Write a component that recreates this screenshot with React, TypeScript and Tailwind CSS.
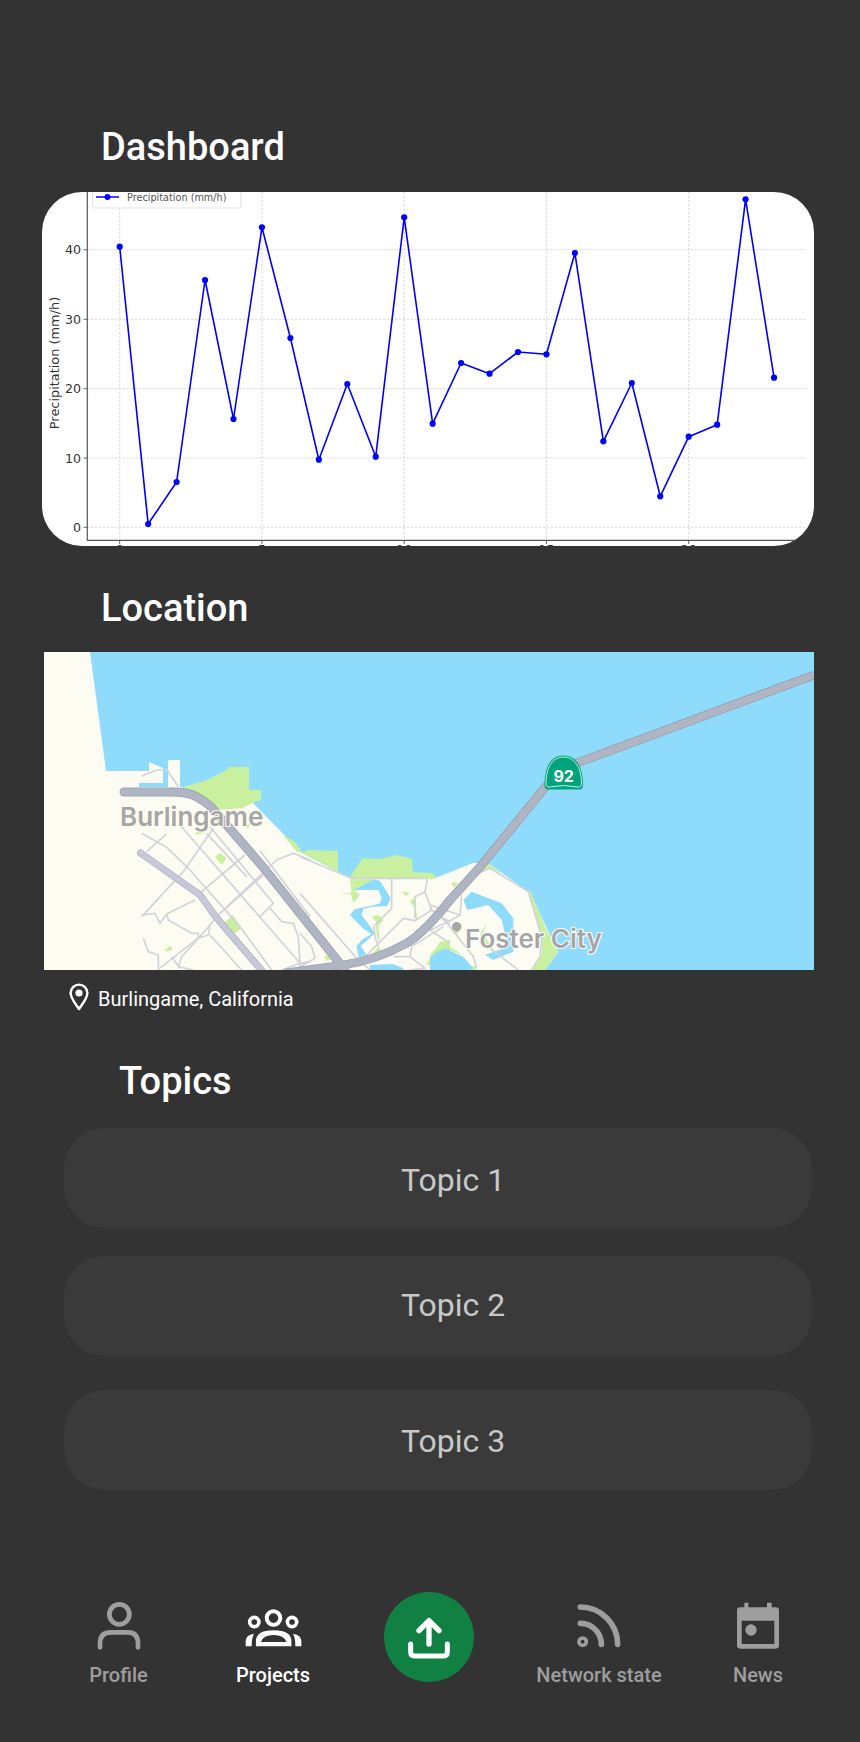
const POINTS = [246.7, 524, 482, 280, 419, 227.3, 338, 459.7, 384, 456.7, 217.3, 423.7, 363, 373.7, 352, 354.3, 253, 441.3, 383, 496.3, 436.7, 424.7, 199.3, 377.7];
const px = (i: number) => 119.7 + 28.45 * i;
const GRID_X = [0, 5, 10, 15, 20];
const GRID_Y = [
  { v: 0, y: 527.3 },
  { v: 10, y: 458 },
  { v: 20, y: 388.7 },
  { v: 30, y: 319.3 },
  { v: 40, y: 249.7 },
];

function Chart() {
  return (
    <div className="ml-[42px] mt-[23px] h-[354px] w-[772px] overflow-hidden rounded-[40px] bg-white">
      <svg viewBox="42 192 772 354" className="block h-[354px] w-[772px]" fontFamily="'DejaVu Sans', sans-serif">
        {GRID_X.map((g) => (
          <line key={g} x1={px(g)} x2={px(g)} y1={192} y2={540} stroke="#cfcfcf" strokeWidth="0.8" strokeDasharray="2.5 1.5" />
        ))}
        {GRID_Y.map((g) => (
          <g key={g.v}>
            <line x1={87} x2={806} y1={g.y} y2={g.y} stroke="#cfcfcf" strokeWidth="0.8" strokeDasharray="2.5 1.5" />
            <line x1={83.5} x2={87} y1={g.y} y2={g.y} stroke="#444" strokeWidth="0.8" />
            <text x={81} y={g.y + 4.5} textAnchor="end" fontSize="12.6" fill="#333">{g.v}</text>
          </g>
        ))}
        <line x1={87.3} x2={87.3} y1={192} y2={540.5} stroke="#555" strokeWidth="1.2" />
        <line x1={87} x2={810} y1={540.3} y2={540.3} stroke="#555" strokeWidth="1.2" />
        {GRID_X.map((g) => (
          <g key={g}>
            <line x1={px(g)} x2={px(g)} y1={540} y2={544} stroke="#444" strokeWidth="0.8" />
            <text x={px(g)} y={553.6} textAnchor="middle" fontSize="12.6" fill="#333">{g}</text>
          </g>
        ))}
        <text transform="translate(55 363) rotate(-90)" y={4} textAnchor="middle" fontSize="12.9" fill="#333">Precipitation (mm/h)</text>
        <polyline points={POINTS.map((y, i) => `${px(i)},${y}`).join(" ")} fill="none" stroke="#0000ff" strokeWidth="1.6" strokeLinejoin="round" />
        {POINTS.map((y, i) => (
          <circle key={i} cx={px(i)} cy={y} r="3.1" fill="#0000ff" />
        ))}
        <rect x={92.5} y={180} width={148.5} height={28} rx="2" fill="#fff" stroke="#e0e0e0" />
        <line x1={96} x2={119} y1={197} y2={197} stroke="#0000ff" strokeWidth="1.4" />
        <circle cx={107.5} cy={197} r="3" fill="#0000ff" />
        <text x={127} y={201} fontSize="9.7" fill="#555">Precipitation (mm/h)</text>
      </svg>
    </div>
  );
}

const HWY_WEST = "M124 792 H173 Q187 792 195 796 Q205 801 212 808 L263 867 L345 970";
const HWY_92 = "M285 973 L343 965 Q377 960 407 943 Q425 932 450 900 L480 867 L547 785 Q558 772 577 763 L814 675";

function MapView() {
  const road = "#d2d3da";
  const green = "#c9f09f";
  const water = "#8fdbfb";
  return (
    <div className="ml-[44px] mt-[22px] h-[318px] w-[770px] overflow-hidden">
      <svg viewBox="44 652 770 318" className="block h-[318px] w-[770px]" fontFamily="Inter, sans-serif">
        <rect x="44" y="652" width="770" height="318" fill={water} />
        <polygon
          fill="#fdfcf3"
          points="44,652 90,652 106,771 149,771 149,762 163,768 168,768 168,760 180,760 180,787 253,803 302,853 350,878 430,878 438,877 473,863 488,863 530,893 558,952 545,970 44,970"
        />
        <rect x="139" y="783" width="29" height="4" fill={water} />
        <polygon fill={water} points="163,768 168,768 168,783 163,783" />

        {/* parks */}
        <g fill={green}>
          <polygon points="183,787 207,780 223,772 230,767 249,767 249,790 261,790 261,800 252,803 243,808 217,810" />
          <polygon points="283,835 295,842 302,852 297,852" />
          <polygon points="302,853 307,850 338,851 338,872 317,860" />
          <polygon points="353,872 363,858 380,859 397,855 412,859 413,872 432,873 437,878 350,878" />
        </g>
        <g transform="translate(130 760) scale(0.3333)" fill={green}>
          <polygon points="255,290 270,278 290,295 275,315" />
          <polygon points="282,490 308,465 335,505 310,522" />
          <polygon points="105,570 122,557 128,568 112,575" />
          <polygon points="195,218 235,210 220,220 200,224" />
          <polygon points="345,195 360,190 355,205 345,205" />
        </g>
        <g transform="translate(300 840) scale(0.3333)">
          <g fill={green}>
            <polygon points="150,118 180,118 222,118 165,152 180,165 160,190 153,162 118,160 155,158" />
            <polygon points="215,228 235,225 250,240 235,258 240,310 230,290 228,245" />
            <polygon points="235,320 245,335 215,345" />
            <polygon points="305,155 330,158 318,168" />
            <polygon points="330,185 345,170 352,240 342,230 342,200" />
            <polygon points="72,350 85,345 92,360 80,362" />
            <polygon points="378,375 420,305 450,300 450,325 420,335 395,375" />
          </g>
          <g fill={water}>
            <polygon points="162,150 222,118 240,122 272,175 262,198 215,200 190,207 185,225 225,280 205,298 182,318 200,345 175,352 170,318 188,298 215,282 192,268 150,225 165,207 215,197 240,190 245,175 235,150" />
            <polygon points="210,375 280,372 310,385 310,390 210,390" />
            <polygon points="395,375 420,335 450,325 450,390 395,390" />
          </g>
        </g>
        <g transform="translate(430 840) scale(0.3333)">
          <g fill={green}>
            <polygon points="300,150 345,260 383,335 345,390 305,390 335,340 335,290 295,155" />
            <polygon points="150,95 175,70 215,100 180,85" />
            <polygon points="65,125 85,130 70,145" />
            <polygon points="0,100 20,115 0,120" />
            <polygon points="150,285 170,248 160,280 190,330 165,325" />
            <polygon points="65,275 90,270 80,285" />
            <polygon points="0,345 35,305 100,345 45,325 0,370" />
            <polygon points="110,385 135,378 138,390 110,390" />
          </g>
          <g fill={water}>
            <polygon points="100,180 125,155 215,190 250,235 250,335 190,360 165,345 235,320 215,240 175,195 112,210" />
            <polygon points="0,390 0,355 20,335 45,325 100,350 130,385 120,390" />
          </g>
        </g>

        {/* small roads */}
        <g transform="translate(130 760) scale(0.3333)" fill="none" stroke={road} strokeWidth="5" strokeLinejoin="round">
          <polyline points="35,48 80,30 110,28 145,80" />
          <polyline points="35,220 110,262 175,325 330,500 425,630" />
          <polyline points="50,275 110,222" />
          <polyline points="150,195 510,610" />
          <polyline points="240,200 430,430 390,470" />
          <polyline points="250,205 160,335 35,470" />
          <polyline points="345,285 215,395" />
          <polyline points="400,345 270,460" />
          <polyline points="230,220 350,350" />
          <polyline points="390,272 540,470" />
          <polyline points="540,300 490,280 440,300 270,460 210,530 85,628" />
          <polyline points="35,465 75,460 90,490 110,462 195,420" />
          <polyline points="110,462 115,480 185,520 205,520 205,535 155,590 145,620 190,630" />
          <polyline points="240,495 235,525 205,535" />
          <polyline points="40,535 55,575 85,585 85,628" />
          <polyline points="125,590 150,625" />
          <polyline points="240,525 335,630" />
          <polyline points="420,445 455,485 490,490 505,530 510,610 510,630" />
          <polyline points="455,630 510,610 540,605" />
        </g>
        <g transform="translate(300 840) scale(0.3333)" fill="none" stroke={road} strokeWidth="5" strokeLinejoin="round">
          <polyline points="0,50 155,115 383,115 375,155 395,210" />
          <polyline points="275,115 275,205 222,258 225,290 235,320" />
          <polyline points="375,155 345,170 345,235" />
          <polyline points="200,345 310,235 345,242 395,210" />
          <polyline points="0,160 170,355 210,390" />
          <polyline points="0,280 35,320 45,355 0,380" />
          <polyline points="280,350 330,350 335,320 430,260" />
          <polyline points="330,350 375,385 330,390" />
          <polyline points="390,270 450,310" />
          <polyline points="420,230 450,245" />
        </g>
        <g transform="translate(430 840) scale(0.3333)" fill="none" stroke={road} strokeWidth="5" strokeLinejoin="round">
          <polyline points="145,100 180,85 295,155 335,290 330,350 305,390" />
          <polyline points="95,165 90,225 45,210 0,195" />
          <polyline points="90,225 55,245 0,270" />
          <polyline points="0,205 60,255" />
          <polyline points="40,235 130,350 140,385" />
          <polyline points="180,325 265,390" />
        </g>

        {/* highways */}
        <polyline points="140.5,853 200,895 216,917 263,972" fill="none" stroke="#adb0c2" strokeWidth="7" strokeLinecap="round" />
        <polyline points="140.5,853 200,895 216,917 263,972" fill="none" stroke="#c7c9d9" strokeWidth="5.6" strokeLinecap="round" />
        <path d={HWY_WEST} fill="none" stroke="#9a9eae" strokeWidth="9" strokeLinecap="round" />
        <path d={HWY_92} fill="none" stroke="#9a9eae" strokeWidth="8.8" />
        <path d={HWY_WEST} fill="none" stroke="#b0b5c4" strokeWidth="7.4" strokeLinecap="round" />
        <path d={HWY_92} fill="none" stroke="#b0b5c4" strokeWidth="7.2" />

        {/* labels */}
        <circle cx="456.7" cy="926.7" r="4.7" fill="#a6a6a6" />
        <text x="120" y="826" fontSize="26" fontWeight="600" fill="#a6a6a6" stroke="#fdfcf3" strokeWidth="2" paintOrder="stroke">Burlingame</text>
        <text x="465" y="948" fontSize="26" fontWeight="600" fill="#a6a6a6" stroke="#ffffff" strokeWidth="2" paintOrder="stroke">Foster City</text>

        {/* route shield */}
        <path d="M544.5 785 C544.5 768 550 755.5 563.5 755.5 C577 755.5 583 768 583 785 Q583 789.5 579 789.5 H548.5 Q544.5 789.5 544.5 785 Z" fill="#00a37a" />
        <path d="M546 783 C546 769 551.5 757 563.5 757 C575.5 757 581.5 769 581.5 783 Q581.5 787.3 578 787 Q563.5 784 549.5 787 Q546 787.3 546 783 Z" fill="none" stroke="#fff" strokeWidth="0.8" />
        <text x="563.7" y="782" textAnchor="middle" fontSize="16" fontWeight="700" fill="#fff">92</text>
      </svg>
    </div>
  );
}

function ProfileIcon() {
  return (
    <svg viewBox="105 90 135 156" className="h-[52px] w-[45px]" fill="none" stroke="#9e9e9e" strokeWidth="14" strokeLinecap="round">
      <circle cx="175" cy="133" r="30" />
      <path d="M117 232 V220 Q117 187 150 187 H200 Q231 187 231 220 V232" />
    </svg>
  );
}

function ProjectsIcon() {
  return (
    <svg viewBox="550 115 172 132" className="h-[44px] w-[57px]" fill="none">
      <circle cx="636" cy="145" r="20.5" stroke="#fff" strokeWidth="12" />
      <circle cx="578" cy="157" r="14" stroke="#fff" strokeWidth="11" />
      <circle cx="692" cy="157" r="14" stroke="#fff" strokeWidth="11" />
      <path fillRule="evenodd" fill="#fff" d="M583 230 V215 Q583 182 636 182 Q690 182 690 215 V230 Z M598 217 Q605 196 636 196 Q668 196 675 217 Z" />
      <path fill="#fff" d="M552 230 V214 Q552 196 577 192 Q570 205 570 230 Z M720 230 V214 Q720 196 695 192 Q702 205 702 230 Z" />
    </svg>
  );
}

function UploadIcon() {
  return (
    <svg viewBox="1030 135 150 135" className="h-[45px] w-[50px]" fill="none" stroke="#fff" strokeLinecap="round" strokeLinejoin="round">
      <path d="M1105 152 V222 M1075 182 L1105 152 L1135 182" strokeWidth="16" />
      <path d="M1050 222 V246 Q1050 258 1062 258 H1148 Q1160 258 1160 246 V222" strokeWidth="15" />
    </svg>
  );
}

function RssIcon() {
  return (
    <svg viewBox="405 100 138 147" className="h-[49px] w-[46px]" fill="none" stroke="#9e9e9e" strokeLinecap="round">
      <circle cx="425" cy="216" r="11" strokeWidth="11" />
      <path d="M418 161 A62 62 0 0 1 481 224" strokeWidth="17" />
      <path d="M418 112 A112 112 0 0 1 530 224" strokeWidth="17" />
    </svg>
  );
}

function CalendarIcon() {
  return (
    <svg viewBox="888 96 132 150" className="h-[50px] w-[44px]">
      <path fillRule="evenodd" fill="#9e9e9e" d="M913 98 H925 V112 H981 V98 H995 V112 H1007 Q1017 112 1017 122 V226 Q1017 236 1007 236 H901 Q891 236 891 226 V122 Q891 112 901 112 H913 Z M905 152 V222 H1003 V152 Z" />
      <circle cx="933" cy="180" r="17" fill="#9e9e9e" />
    </svg>
  );
}

function NavItem({ width, label, active, children }: { width: string; label: string; active?: boolean; children: React.ReactNode }) {
  return (
    <div className={`flex flex-col items-center ${width}`}>
      <div className="flex h-[60px] items-end justify-center">{children}</div>
      <span className={`mt-[11px] text-[20px] font-medium leading-[24px] ${active ? "text-white" : "text-[#9e9e9e]"}`}>{label}</span>
    </div>
  );
}

export default function App() {
  return (
    <div className="h-[1742px] w-[860px] overflow-hidden bg-[#333333] font-['Roboto',sans-serif] text-white">
      <h1 className="ml-[101px] pt-[125px] text-[38px] font-medium leading-[44px]">Dashboard</h1>
      <Chart />

      <h2 className="ml-[101px] mt-[40px] text-[38px] font-medium leading-[44px]">Location</h2>
      <MapView />
      <div className="ml-[69px] mt-[15px] flex items-center gap-[9px]">
        <svg viewBox="0 2 20 28" className="h-[28px] w-[20px] overflow-visible" fill="none">
          <path d="M10 26 C6.5 20.5 1.6 15.5 1.6 10 A8.4 8.4 0 0 1 18.4 10 C18.4 15.5 13.5 20.5 10 26 Z" stroke="#fff" strokeWidth="2.4" strokeLinejoin="round" />
          <circle cx="10" cy="10" r="3.6" fill="#fff" />
        </svg>
        <span className="text-[20px] leading-[28px]">Burlingame, California</span>
      </div>

      <h2 className="ml-[119px] mt-[46px] text-[38px] font-medium leading-[44px]">Topics</h2>
      <div className="ml-[64px] mt-[25px] flex w-[748px] flex-col">
        <div className="flex h-[100px] items-center justify-center rounded-[40px] bg-[#3a3a3a] pl-[30px] pt-[4px] text-[32px] text-[#c8c8c8]">Topic 1</div>
        <div className="mt-[28px] flex h-[100px] items-center justify-center rounded-[40px] bg-[#3a3a3a] pb-[3px] pl-[30px] text-[32px] text-[#c8c8c8]">Topic 2</div>
        <div className="mt-[34px] flex h-[100px] items-center justify-center rounded-[40px] bg-[#3a3a3a] pl-[30px] pt-[1px] text-[32px] text-[#c8c8c8]">Topic 3</div>
      </div>

      <nav className="ml-[41px] mt-[102px] flex items-start">
        <NavItem width="w-[155px]" label="Profile"><ProfileIcon /></NavItem>
        <NavItem width="w-[154px]" label="Projects" active><ProjectsIcon /></NavItem>
        <div className="flex w-[158px] justify-center">
          <div className="flex h-[90px] w-[90px] items-center justify-center rounded-full bg-[#108043]"><UploadIcon /></div>
        </div>
        <NavItem width="w-[182px]" label="Network state"><RssIcon /></NavItem>
        <NavItem width="w-[136px]" label="News"><CalendarIcon /></NavItem>
      </nav>
    </div>
  );
}
